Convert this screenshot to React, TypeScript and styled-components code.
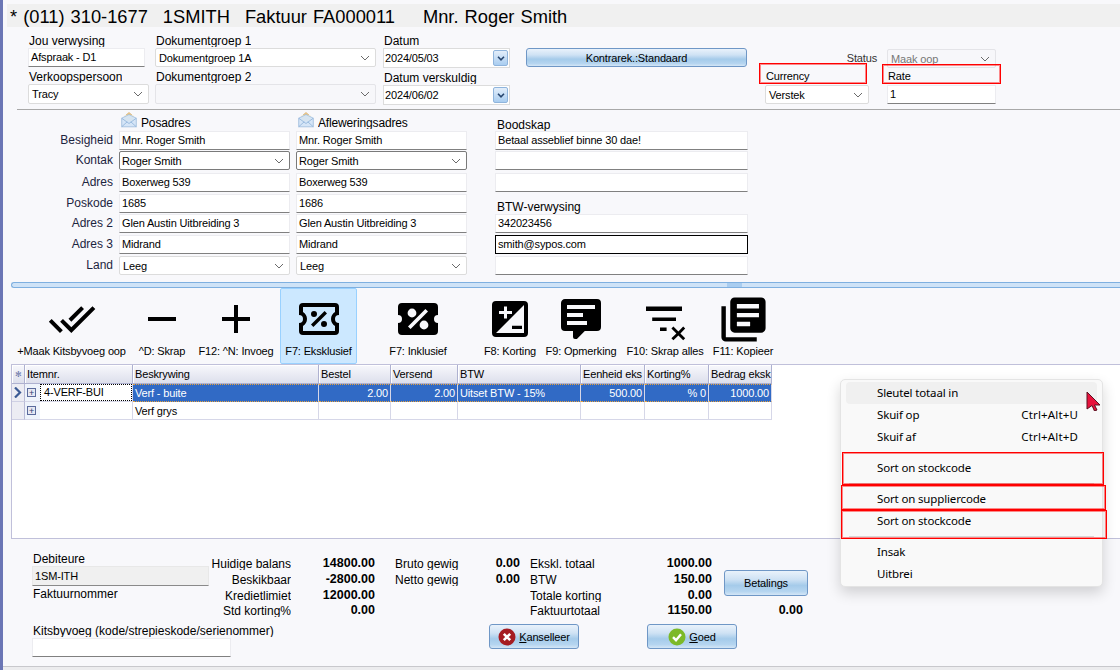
import React from 'react';
import styled, { createGlobalStyle, css } from 'styled-components';

const FONT = `"Liberation Sans", Arial, sans-serif`;

const GlobalStyle = createGlobalStyle`
  html, body {
    margin: 0;
    padding: 0;
    background: #f8f8fb;
  }
  * {
    box-sizing: border-box;
  }
`;

const COLUMNS = '13px 108px 186px 72px 67px 123px 64px 64px 63px';

const narrowText = css`
  font-size: 11px;
  letter-spacing: -0.15px;
`;

const Chevron = () => (
  <ChevronIcon width="10" height="6" viewBox="0 0 10 6">
    <path d="M1 1l4 4 4-4" fill="none" stroke="#6a6a6a" strokeWidth="1" />
  </ChevronIcon>
);

const Combo = ({
  value,
  $dark,
  $disabled,
  $height,
}: {
  value?: string;
  $dark?: boolean;
  $disabled?: boolean;
  $height?: number;
}) => (
  <ComboBox $dark={$dark} $disabled={$disabled} $height={$height}>
    <span>{value}</span>
    <Chevron />
  </ComboBox>
);

const DateField = ({ value }: { value: string }) => (
  <DateBox>
    <span>{value}</span>
    <SpinButton>
      <svg width="8" height="5" viewBox="0 0 8 5">
        <path d="M1 .8l3 3 3-3" fill="none" stroke="#27466f" strokeWidth="1.6" />
      </svg>
    </SpinButton>
  </DateBox>
);

const MailIcon = () => (
  <MailSvg width="16" height="16" viewBox="0 0 16 16">
    <path d="M8 .5l3.5 3h-7z" fill="#f3cf8e" stroke="#cf9f55" strokeWidth=".6" />
    <rect x="3.5" y="3" width="9" height="6" fill="#fdf0d2" />
    <path d="M.7 6.2L8 2.5l7.3 3.7v8.6H.7z" fill="#cfe2f6" fillOpacity=".85" stroke="#8fb3d9" strokeWidth=".7" />
    <path d="M.7 14.8l5.5-5M15.3 14.8l-5.5-5M.7 6.2L8 11.5l7.3-5.3" fill="none" stroke="#8fb3d9" strokeWidth=".8" />
  </MailSvg>
);

const TICKET =
  'M4 4h16a2 2 0 0 1 2 2v4a2 2 0 0 0 0 4v4a2 2 0 0 1-2 2H4a2 2 0 0 1-2-2v-4a2 2 0 0 0 0-4V6a2 2 0 0 1 2-2z';
const TICKET_INNER = 'M4 6v2.54c1.2.7 2 1.98 2 3.46s-.8 2.76-2 3.46V18h16v-2.54c-1.2-.7-2-1.98-2-3.46s.8-2.76 2-3.46V6z';
const PERCENT_SMALL =
  'M14.8 8L16 9.2 9.2 16 8 14.8zM9.5 8a1.5 1.5 0 1 1 0 3 1.5 1.5 0 0 1 0-3zM14.5 13a1.5 1.5 0 1 1 0 3 1.5 1.5 0 0 1 0-3z';
const PERCENT_LARGE =
  'M15.7 7L17 8.3 8.3 17 7 15.7zM9 6.8a2.2 2.2 0 1 1 0 4.4 2.2 2.2 0 0 1 0-4.4zM15 12.8a2.2 2.2 0 1 1 0 4.4 2.2 2.2 0 0 1 0-4.4z';

const ICONS: Record<string, React.ReactNode> = {
  doneAll: <path d="M18 7l-1.41-1.41-6.34 6.34 1.41 1.41L18 7zm4.24-1.41L11.66 16.17 7.48 12l-1.41 1.41L11.66 19l12-12-1.42-1.41zM.41 13.41L6 19l1.41-1.41L1.83 12 .41 13.41z" />,
  minus: <path d="M19 13H5v-2h14v2z" />,
  plus: <path d="M19 13h-6v6h-2v-6H5v-2h6V5h2v6h6v2z" />,
  ticketOutline: <path fillRule="evenodd" d={`${TICKET}${TICKET_INNER}${PERCENT_SMALL}`} />,
  ticketSolid: <path fillRule="evenodd" d={`${TICKET}${PERCENT_LARGE}`} />,
  exposure: (
    <path
      fillRule="evenodd"
      d="M5 3h14a2 2 0 0 1 2 2v14a2 2 0 0 1-2 2H5a2 2 0 0 1-2-2V5a2 2 0 0 1 2-2zM19 5L5 19h14zM6.5 8H9V5.8h1.5V8H13v1.5h-2.5v2.2H9V9.5H6.5zM13 15.4h5v1.6h-5z"
    />
  ),
  comment: (
    <path
      fillRule="evenodd"
      d="M9 22a1 1 0 0 1-1-1v-3H4a2 2 0 0 1-2-2V4c0-1.11.9-2 2-2h16a2 2 0 0 1 2 2v12a2 2 0 0 1-2 2h-6.1l-3.7 3.71c-.2.19-.45.29-.7.29H9zM5 5v2h14V5zM5 9v2h8V9zM5 13v2h10v-2z"
    />
  ),
  filterOff: (
    <>
      <path d="M2.5 5.8h18V8h-18zM5.6 11.2h11.9V13H5.6zM9.5 16.3h3.3V18H9.5z" />
      <path d="M16.2 15.8l2.5 2.4 2.4-2.4 1 1-2.4 2.4 2.4 2.4-1 1-2.4-2.4-2.5 2.4-1-1 2.5-2.4-2.5-2.4z" />
    </>
  ),
  books: <path d="M4 6H2v14c0 1.1.9 2 2 2h14v-2H4V6zm16-4H8c-1.1 0-2 .9-2 2v12c0 1.1.9 2 2 2h12c1.1 0 2-.9 2-2V4c0-1.1-.9-2-2-2zm-1 9H9V9h10v2zm-4 4H9v-2h6v2zm4-8H9V5h10v2z" />,
};

const TITLE_PARTS = [
  { text: '* (011) 310-1677', left: 0 },
  { text: '1SMITH', left: 15 },
  { text: 'Faktuur FA000011', left: 15 },
  { text: 'Mnr. Roger Smith', left: 28 },
];

const TOOLS = [
  { label: '+Maak Kitsbyvoeg oop', icon: 'doneAll', width: 111 },
  { label: '^D: Skrap', icon: 'minus', width: 64 },
  { label: 'F12: ^N: Invoeg', icon: 'plus', width: 78 },
  { label: 'F7: Eksklusief', icon: 'ticketOutline', width: 77, active: true },
  { label: 'F7: Inklusief', icon: 'ticketSolid', width: 112 },
  { label: 'F8: Korting', icon: 'exposure', width: 66 },
  { label: 'F9: Opmerking', icon: 'comment', width: 70 },
  { label: 'F10: Skrap alles', icon: 'filterOff', width: 92 },
  { label: 'F11: Kopieer', icon: 'books', width: 58, size: 53 },
];

const HEADERS = ['Itemnr.', 'Beskrywing', 'Bestel', 'Versend', 'BTW', 'Eenheid eks', 'Korting%', 'Bedrag eksk'];

const ADDRESS_ROWS = [
  { label: 'Besigheid', a: 'Mnr. Roger Smith', b: 'Mnr. Roger Smith', c: 'Betaal asseblief binne 30 dae!' },
  { label: 'Kontak', a: 'Roger Smith', b: 'Roger Smith', c: '', combo: true, dark: true },
  { label: 'Adres', a: 'Boxerweg 539', b: 'Boxerweg 539', c: '' },
  { label: 'Poskode', a: '1685', b: '1686', caption: 'BTW-verwysing' },
  { label: 'Adres 2', a: 'Glen Austin Uitbreiding 3', b: 'Glen Austin Uitbreiding 3', c: '342023456' },
  { label: 'Adres 3', a: 'Midrand', b: 'Midrand', c: 'smith@sypos.com', focused: true },
  { label: 'Land', a: 'Leeg', b: 'Leeg', c: '', combo: true },
];

const TOTALS = [
  { width: 82, align: 'right', items: ['Huidige balans', 'Beskikbaar', 'Kredietlimiet', 'Std korting%'] },
  { width: 84, align: 'right', bold: true, items: ['14800.00', '-2800.00', '12000.00', '0.00'] },
  { width: 20, items: [] },
  { width: 75, items: ['Bruto gewig', 'Netto gewig'] },
  { width: 50, align: 'right', bold: true, items: ['0.00', '0.00'] },
  { width: 10, items: [] },
  { width: 120, items: ['Ekskl. totaal', 'BTW', 'Totale korting', 'Faktuurtotaal'] },
  { width: 62, align: 'right', bold: true, items: ['1000.00', '150.00', '0.00', '1150.00'] },
];

const MENU_BOXES = [
  { x: 759, y: 63, w: 108, h: 21 },
  { x: 882, y: 64, w: 119, h: 20 },
  { x: 842, y: 452, w: 262, h: 33 },
  { x: 841, y: 485, w: 265, h: 25 },
  { x: 841, y: 510, w: 266, h: 29 },
];

const App = () => {
  return (
    <Page>
      <GlobalStyle />
      <Strip />
      <Main>
        <TitleBar>
          {TITLE_PARTS.map((part) => (
            <TitlePart key={part.text} $left={part.left}>
              {part.text}
            </TitlePart>
          ))}
        </TitleBar>

        <TopForm>
          <FormColumn $left={25} $width={121}>
            <Label>Jou verwysing</Label>
            <TextField $width={117}>Afspraak - D1</TextField>
            <Label $gap>Verkoopspersoon</Label>
            <Combo value="Tracy" $height={20} />
          </FormColumn>
          <FormColumn $left={6} $width={221}>
            <Label>Dokumentgroep 1</Label>
            <Combo value="Dokumentgroep 1A" />
            <Label $gap>Dokumentgroep 2</Label>
            <Combo $disabled $height={20} />
          </FormColumn>
          <FormColumn $left={7} $width={127}>
            <Label>Datum</Label>
            <DateField value="2024/05/03" />
            <Label $gap>Datum verskuldig</Label>
            <DateField value="2024/06/02" />
          </FormColumn>
          <ContractColumn>
            <BlueButton $height={19}>Kontrarek.:Standaard</BlueButton>
          </ContractColumn>
          <StatusGrid>
            <StatusLabel>Status</StatusLabel>
            <Combo value="Maak oop" $disabled />
            <SmallCaption>Currency</SmallCaption>
            <SmallCaption>Rate</SmallCaption>
            <Combo value="Verstek" />
            <TextField>1</TextField>
          </StatusGrid>
        </TopForm>

        <Divider />

        <AddressGrid>
          <span />
          <AddressHeader>
            <MailIcon />
            <span>Posadres</span>
          </AddressHeader>
          <AddressHeader>
            <MailIcon />
            <span>Afleweringsadres</span>
          </AddressHeader>
          <BoodskapLabel $drop>Boodskap</BoodskapLabel>
          {ADDRESS_ROWS.map((row) => (
            <React.Fragment key={row.label}>
              <RowLabel>{row.label}</RowLabel>
              {row.combo ? <Combo value={row.a} $dark={row.dark} /> : <TextField>{row.a}</TextField>}
              <AddressSecond>
                {row.combo ? <Combo value={row.b} $dark={row.dark} /> : <TextField>{row.b}</TextField>}
              </AddressSecond>
              {row.caption ? (
                <BoodskapLabel>{row.caption}</BoodskapLabel>
              ) : (
                <TextField $focused={row.focused}>{row.c}</TextField>
              )}
            </React.Fragment>
          ))}
        </AddressGrid>

        <Splitter>
          <SplitterGrip />
        </Splitter>

        <Toolbar>
          {TOOLS.map((tool) => (
            <ToolButton key={tool.label} $width={tool.width} $active={tool.active}>
              <IconBox>
                <svg width={tool.size || 48} height={tool.size || 48} viewBox="0 0 24 24" fill="#000">
                  {ICONS[tool.icon]}
                </svg>
              </IconBox>
              <ToolLabel>{tool.label}</ToolLabel>
            </ToolButton>
          ))}
        </Toolbar>

        <GridPanel>
          <GridRow>
            <HeaderCell $center>
              <CornerMark>✻</CornerMark>
            </HeaderCell>
            {HEADERS.map((title) => (
              <HeaderCell key={title}>{title}</HeaderCell>
            ))}
          </GridRow>
          <GridRow>
            <SelectorCell>
              <svg width="8" height="11" viewBox="0 0 8 11">
                <path d="M1 .5l5 5-5 5" fill="none" stroke="#3c5a94" strokeWidth="2.2" />
              </svg>
            </SelectorCell>
            <ItemCell>
              <Expander>+</Expander>
              <FocusText>4-VERF-BUI</FocusText>
            </ItemCell>
            <SelectedCell>Verf - buite</SelectedCell>
            <SelectedCell $right>2.00</SelectedCell>
            <SelectedCell $right>2.00</SelectedCell>
            <SelectedCell>Uitset BTW - 15%</SelectedCell>
            <SelectedCell $right>500.00</SelectedCell>
            <SelectedCell $right>% 0</SelectedCell>
            <SelectedCell $right>1000.00</SelectedCell>
          </GridRow>
          <GridRow>
            <SelectorCell />
            <ItemCell>
              <Expander>+</Expander>
            </ItemCell>
            <BodyCell>Verf grys</BodyCell>
            <BodyCell />
            <BodyCell />
            <BodyCell />
            <BodyCell />
            <BodyCell />
            <BodyCell />
          </GridRow>
        </GridPanel>

        <BottomPanel>
          <TotalsRow>
            <DebtorColumn>
              <Label>Debiteure</Label>
              <ReadOnlyField>1SM-ITH</ReadOnlyField>
              <InvoiceLabel>Faktuurnommer</InvoiceLabel>
            </DebtorColumn>
            <TotalsBlock>
              {TOTALS.map((column, index) => (
                <TotalsColumn key={index} $width={column.width} $align={column.align}>
                  {column.items.map((item, row) => (
                    <TotalsCell key={row} $bold={column.bold} $row={row}>
                      {item}
                    </TotalsCell>
                  ))}
                </TotalsColumn>
              ))}
              <PaymentColumn>
                <BlueButton $height={26}>Betalings</BlueButton>
                <PaymentValue>0.00</PaymentValue>
              </PaymentColumn>
            </TotalsBlock>
          </TotalsRow>
          <FooterRow>
            <KitColumn>
              <Label>Kitsbyvoeg (kode/strepieskode/serienommer)</Label>
              <TextField>{''}</TextField>
            </KitColumn>
            <ActionButton $left={258}>
              <svg width="18" height="18" viewBox="0 0 18 18">
                <circle cx="9" cy="9" r="8.5" fill="#a51c22" />
                <path d="M5.8 5.8l6.4 6.4M12.2 5.8l-6.4 6.4" stroke="#fff" strokeWidth="2.6" />
              </svg>
              <span>
                <u>K</u>anselleer
              </span>
            </ActionButton>
            <ActionButton $left={68}>
              <svg width="18" height="18" viewBox="0 0 18 18">
                <circle cx="9" cy="9" r="8.5" fill="#7cb928" />
                <path d="M5 9.2l3 3 5-6" fill="none" stroke="#fff" strokeWidth="2.4" />
              </svg>
              <span>
                <u>G</u>oed
              </span>
            </ActionButton>
          </FooterRow>
        </BottomPanel>
        <BottomEdge />
      </Main>

      <ContextMenu>
        <MenuItem $hover>
          <span>Sleutel totaal in</span>
        </MenuItem>
        <MenuItem>
          <span>Skuif op</span>
          <Shortcut>Ctrl+Alt+U</Shortcut>
        </MenuItem>
        <MenuItem>
          <span>Skuif af</span>
          <Shortcut>Ctrl+Alt+D</Shortcut>
        </MenuItem>
        <MenuSeparator $hidden />
        <MenuItem>
          <span>Sort on stockcode</span>
        </MenuItem>
        <MenuSeparator />
        <MenuItem>
          <span>Sort on suppliercode</span>
        </MenuItem>
        <MenuItem>
          <span>Sort on stockcode</span>
        </MenuItem>
        <MenuSeparator />
        <MenuItem>
          <span>Insak</span>
        </MenuItem>
        <MenuItem>
          <span>Uitbrei</span>
        </MenuItem>
      </ContextMenu>

      <Cursor width="16" height="20" viewBox="0 0 16 20">
        <path d="M1 1l13 13H8.5l2.5 5-2.5 1-2.5-5.5L1 18z" fill="#e8123c" stroke="#5a1020" strokeWidth="1" />
      </Cursor>

      {MENU_BOXES.map((box) => (
        <RedBox key={`${box.x}-${box.y}`} $x={box.x} $y={box.y} $w={box.w} $h={box.h} />
      ))}
    </Page>
  );
};

const Page = styled.div`
  position: relative;
  width: 1120px;
  height: 670px;
  overflow: hidden;

  display: flex;

  background: #f8f8fb;
  color: #000;
  font-family: ${FONT};
  font-size: 12px;
`;

const Strip = styled.div`
  width: 3px;
  flex-shrink: 0;
  background: #6b76b5;
`;

const Main = styled.div`
  flex: 1;
  min-width: 0;
  display: flex;
  flex-direction: column;
`;

const TitleBar = styled.div`
  height: 23px;
  margin: 4px 0 0 4px;
  padding-left: 3px;

  display: flex;

  background: #f0f0f0;
  font-size: 18.3px;
  line-height: 25px;
  word-spacing: 1px;
  white-space: pre;
`;

const TitlePart = styled.span<{ $left: number }>`
  margin-left: ${({ $left }) => $left}px;
`;

const TopForm = styled.div`
  display: flex;
  height: 82px;
`;

const FormColumn = styled.div<{ $left: number; $width: number }>`
  width: ${({ $width }) => $width}px;
  margin-left: ${({ $left }) => $left}px;
  padding-top: 7px;
`;

const ContractColumn = styled.div`
  width: 221px;
  margin-left: 16px;
  padding-top: 21px;
`;

const StatusGrid = styled.div`
  display: grid;
  grid-template-columns: 104px 109px;
  grid-template-rows: 19px 17px 19px;
  column-gap: 18px;
  margin-left: 18px;
  padding-top: 22px;
`;

const StatusLabel = styled.div`
  margin-right: -8px;
  text-align: right;
  line-height: 19px;
  color: #333;
  ${narrowText}
`;

const SmallCaption = styled.div`
  padding-left: 1px;
  line-height: 17px;
  ${narrowText}
`;

const Label = styled.div<{ $gap?: boolean }>`
  width: max-content;
  height: 13px;
  margin-top: ${({ $gap }) => ($gap ? 3 : 0)}px;
  margin-bottom: 1px;
  padding-left: 1px;
  overflow: hidden;
  line-height: 15px;
  white-space: nowrap;
`;

const TextField = styled.div<{ $width?: number; $focused?: boolean }>`
  width: ${({ $width }) => ($width ? `${$width}px` : '100%')};
  height: 19px;
  padding-left: 2px;

  background: #fff;
  border: 1px solid ${({ $focused }) => ($focused ? '#000' : '#ececf0')};
  border-bottom-color: ${({ $focused }) => ($focused ? '#000' : '#808080')};
  line-height: 17px;
  white-space: nowrap;
  ${narrowText}
`;

const ComboBox = styled.div<{ $dark?: boolean; $disabled?: boolean; $height?: number }>`
  height: ${({ $height }) => $height || 19}px;
  padding: 0 5px 0 ${({ $dark }) => ($dark ? 2 : 3)}px;

  display: flex;
  align-items: center;
  justify-content: space-between;

  background: ${({ $disabled }) => ($disabled ? '#f7f7fa' : '#fff')};
  border: 1px solid ${({ $dark, $disabled }) => ($dark ? '#7a7a7a' : $disabled ? '#e4e4e8' : '#dcdcdc')};
  border-radius: 2px;
  color: ${({ $disabled }) => ($disabled ? '#777' : '#000')};
  white-space: nowrap;
  ${narrowText}
`;

const ChevronIcon = styled.svg`
  flex-shrink: 0;
`;

const DateBox = styled.div`
  height: 20px;
  padding: 0 1px 0 1px;

  display: flex;
  align-items: center;
  justify-content: space-between;

  background: #fff;
  border: 1px solid #dcdcdc;
  ${narrowText}
`;

const SpinButton = styled.div`
  width: 15px;
  height: 16px;

  display: flex;
  align-items: center;
  justify-content: center;

  background: linear-gradient(#e3eefa, #a9cdf0);
  border: 1px solid #8fb4dc;
  border-radius: 2px;
`;

const BlueButton = styled.div<{ $height: number }>`
  width: 100%;
  height: ${({ $height }) => $height}px;

  display: flex;
  align-items: center;
  justify-content: center;

  background: linear-gradient(#e9f2fb 0%, #cfe2f4 35%, #a5cbea 60%, #b5d5f0 85%, #d4e6f6 100%);
  border: 1px solid #6f97c6;
  border-radius: 3px;
  ${narrowText}
`;

const Divider = styled.div`
  height: 1px;
  margin-left: 14px;
  background: #a8a8a8;
`;

const AddressGrid = styled.div`
  display: grid;
  grid-template-columns: 110px 171px 193px 253px;
  grid-template-rows: 21px 20px 22px 21px 20px 21px 21px 20px;
  column-gap: 6px;
`;

const AddressHeader = styled.div`
  height: 20px;
  padding: 2px 0 0 2px;

  display: flex;
  align-items: flex-start;
  gap: 4px;

  line-height: 22px;
  letter-spacing: -0.15px;
  white-space: nowrap;
  overflow: hidden;

  span {
    height: 17px;
    overflow: hidden;
  }
`;

const MailSvg = styled.svg`
  flex-shrink: 0;
`;

const BoodskapLabel = styled.div<{ $drop?: boolean }>`
  align-self: end;
  margin-bottom: ${({ $drop }) => ($drop ? -1 : 0)}px;
  padding-left: 2px;
  line-height: 14px;
`;

const RowLabel = styled.div`
  text-align: right;
  line-height: 18px;
  color: #1c2440;
`;

const AddressSecond = styled.div`
  width: 171px;
`;

const Splitter = styled.div`
  height: 6px;
  margin: 6px 0 0 8px;

  display: flex;

  background: #cfe3f7;
  border: 1px solid #7fb0e0;
  border-right: none;
  border-radius: 3px 0 0 3px;
`;

const SplitterGrip = styled.div`
  width: 15px;
  height: 100%;
  margin-left: 715px;
  background: #a9cdf0;
`;

const Toolbar = styled.div`
  height: 76px;
  padding-left: 13px;
  display: flex;
  gap: 3px;
`;

const ToolButton = styled.div<{ $width: number; $active?: boolean }>`
  width: ${({ $width }) => $width}px;
  margin: 0 ${({ $active }) => ($active ? 2 : 0)}px;
  padding-top: ${({ $active }) => ($active ? 6 : 7)}px;

  display: flex;
  flex-direction: column;
  align-items: center;

  background: ${({ $active }) => ($active ? '#cce8ff' : 'transparent')};
  border: ${({ $active }) => ($active ? '1px solid #99d1ff' : 'none')};
  border-radius: 2px;
`;

const IconBox = styled.div`
  height: 48px;
  display: flex;
  align-items: center;
  justify-content: center;

  svg {
    flex-shrink: 0;
  }
`;

const ToolLabel = styled.div`
  margin-top: 1px;
  line-height: 14px;
  font-size: 11px;
  letter-spacing: -0.15px;
  white-space: nowrap;
`;

const GridPanel = styled.div`
  height: 175px;
  margin-left: 8px;
  background: #fff;
  border: 1px solid #c0c0da;
  border-right: none;
  ${narrowText}
`;

const GridRow = styled.div`
  display: grid;
  grid-template-columns: ${COLUMNS};
  width: 760px;
`;

const HeaderCell = styled.div<{ $center?: boolean }>`
  height: 19px;
  padding-left: ${({ $center }) => ($center ? 0 : 2)}px;

  display: flex;
  align-items: center;
  justify-content: ${({ $center }) => ($center ? 'center' : 'flex-start')};

  background: linear-gradient(#f8f8fc, #dddfec);
  border-right: 1px solid #aeb1d0;
  border-bottom: 1px solid #aeb1d0;
  box-shadow: inset 1px 1px 0 #fff;
  white-space: nowrap;
  overflow: hidden;
`;

const CornerMark = styled.span`
  font-size: 8px;
  color: #6a75a8;
`;

const SelectorCell = styled.div`
  height: 18px;

  display: flex;
  align-items: center;
  justify-content: center;

  background: #ececf3;
  border-right: 1px solid #b8bad6;
  border-bottom: 1px solid #cfd0e4;
`;

const ItemCell = styled.div`
  height: 18px;
  display: flex;
  align-items: center;

  background: linear-gradient(90deg, #eef3fb 15px, #fff 15px);
  border-right: 1px solid #d6d7e8;
  border-bottom: 1px solid #d6d7e8;
`;

const Expander = styled.div`
  width: 9px;
  height: 9px;
  margin: 0 5px 0 2px;
  flex-shrink: 0;

  display: flex;
  align-items: center;
  justify-content: center;

  background: #e6e8f2;
  border: 1px solid #5a6a9c;
  color: #2c3a6c;
  font-size: 9px;
  line-height: 8px;
`;

const FocusText = styled.div`
  flex: 1;
  height: 17px;
  margin-left: -1px;
  padding-left: 3px;

  border: 1px dotted #000;
  line-height: 15px;
  white-space: nowrap;
`;

const SelectedCell = styled.div<{ $right?: boolean }>`
  height: 18px;
  padding: 0 2px;

  background: #316ac5;
  border-top: 1px dotted #e8a23c;
  border-bottom: 1px dotted #e8a23c;
  border-right: 1px solid #d6d7e8;
  color: #fff;
  line-height: 16px;
  text-align: ${({ $right }) => ($right ? 'right' : 'left')};
  white-space: nowrap;
`;

const BodyCell = styled.div`
  height: 18px;
  padding: 0 2px;

  border-right: 1px solid #d6d7e8;
  border-bottom: 1px solid #d6d7e8;
  line-height: 19px;
`;

const BottomPanel = styled.div`
  height: 127px;
  padding: 13px 0 0 29px;
`;

const TotalsRow = styled.div`
  height: 66px;
  display: flex;
`;

const DebtorColumn = styled.div`
  width: 177px;
`;

const ReadOnlyField = styled.div`
  height: 20px;
  padding-left: 2px;

  background: #f0f0f0;
  border: 1px solid #e8e8e8;
  border-bottom-color: #8a8a8a;
  line-height: 18px;
  ${narrowText}
`;

const InvoiceLabel = styled(Label)`
  margin-top: 1px;
`;

const TotalsBlock = styled.div`
  display: flex;
  padding-top: 4px;
`;

const TotalsColumn = styled.div<{ $width: number; $align?: string }>`
  width: ${({ $width }) => $width}px;
  text-align: ${({ $align }) => $align || 'left'};
  white-space: nowrap;
`;

const TotalsCell = styled.div<{ $bold?: boolean; $row: number }>`
  height: ${({ $row }) => ($row < 2 ? 16 : 15)}px;
  line-height: ${({ $bold }) => ($bold ? 15 : 16)}px;
  overflow: hidden;
  font-weight: ${({ $bold }) => ($bold ? 700 : 400)};
  font-size: ${({ $bold }) => ($bold ? 12.5 : 12)}px;

  ${({ $bold }) =>
    !$bold &&
    css`
      height: 14px;
      margin-bottom: ${({ $row }: { $row: number }) => ($row < 2 ? 2 : 1)}px;
    `}
`;

const PaymentColumn = styled.div`
  width: 96px;
  padding: 14px 0 0 12px;
`;

const PaymentValue = styled.div`
  margin-top: 7px;
  padding-right: 5px;
  line-height: 15px;
  font-weight: 700;
  font-size: 12.5px;
  text-align: right;
`;

const FooterRow = styled.div`
  margin-top: 6px;
  display: flex;
  align-items: flex-start;
`;

const KitColumn = styled.div`
  width: 199px;
`;

const ActionButton = styled.div<{ $left: number }>`
  width: 90px;
  height: 25px;
  margin-left: ${({ $left }) => $left}px;

  display: flex;
  align-items: center;
  justify-content: center;
  gap: 3px;

  background: linear-gradient(#e9f2fb 0%, #cfe2f4 35%, #a5cbea 60%, #b5d5f0 85%, #d4e6f6 100%);
  border: 1px solid #6f97c6;
  border-radius: 3px;
  ${narrowText}
`;

const BottomEdge = styled.div`
  flex: 1;
  background: #ececee;
  border-top: 1px solid #c8c8cc;
`;

const ContextMenu = styled.div`
  position: absolute;
  top: 379px;
  left: 840px;
  width: 263px;
  height: 208px;
  padding: 2px 5px;

  background: #f9f9f9;
  border: 1px solid #e4e4e4;
  border-radius: 5px;
  box-shadow: 0 6px 14px rgba(0, 0, 0, 0.16);
  font-family: "Noto Sans", sans-serif;
  font-size: 11.5px;
  letter-spacing: -0.15px;
`;

const MenuItem = styled.div<{ $hover?: boolean }>`
  height: 22px;
  padding: 0 19px 2px 31px;

  display: flex;
  align-items: center;
  justify-content: space-between;

  background: ${({ $hover }) => ($hover ? '#f0f0f0' : 'transparent')};
  border-radius: 4px;
  color: #000;
`;

const Shortcut = styled.span`
  letter-spacing: 0.15px;
`;

const MenuSeparator = styled.div<{ $hidden?: boolean }>`
  height: 1px;
  margin: 4px 3px 4px;
  background: ${({ $hidden }) => ($hidden ? 'transparent' : '#d8d8d8')};
`;

const Cursor = styled.svg`
  position: absolute;
  top: 391px;
  left: 1086px;
`;

const RedBox = styled.div<{ $x: number; $y: number; $w: number; $h: number }>`
  position: absolute;
  top: ${({ $y }) => $y}px;
  left: ${({ $x }) => $x}px;
  width: ${({ $w }) => $w}px;
  height: ${({ $h }) => $h}px;
  border: 1px solid #f00;
  box-shadow: inset 0 0 0 1px rgba(255, 0, 0, 0.45);
`;

export default App;
